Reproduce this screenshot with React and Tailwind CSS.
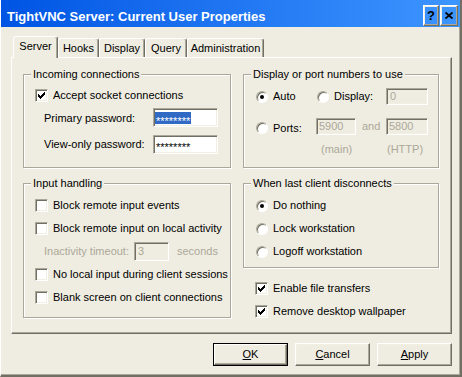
import React from 'react'

const sunken =
  'border border-t-[#ACA899] border-l-[#ACA899] border-b-white border-r-white shadow-[inset_1px_1px_0_#716F64,inset_-1px_-1px_0_#F1EFE2]'
const raised =
  'border border-t-white border-l-white border-b-[#716F64] border-r-[#716F64] shadow-[inset_-1px_-1px_0_#ACA899,inset_1px_1px_0_#F1EFE2]'
const gray = 'text-[#ACA899]'

function CheckMark() {
  return (
    <svg width="7" height="7" viewBox="0 0 7 7" className="block">
      <path d="M0 2h1v3H0zM1 3h1v3H1zM2 4h1v3H2zM3 3h1v3H3zM4 2h1v3H4zM5 1h1v3H5zM6 0h1v3H6z" fill="#000" />
    </svg>
  )
}

function Check({ checked, label }) {
  return (
    <div className="flex items-center">
      <span className={`w-[13px] h-[13px] bg-white flex items-center justify-center ${sunken}`}>
        {checked && <CheckMark />}
      </span>
      <span className="ml-[5px]">{label}</span>
    </div>
  )
}

function Radio({ on, label, className = '' }) {
  return (
    <div className={`flex items-center ${className}`}>
      <span className="w-[12px] h-[12px] rounded-full bg-white flex items-center justify-center border border-t-[#ACA899] border-l-[#ACA899] border-b-white border-r-white shadow-[inset_1px_1px_0_#716F64]">
        {on && <span className="w-[4px] h-[4px] rounded-full bg-black" />}
      </span>
      <span className="ml-[5px]">{label}</span>
    </div>
  )
}

function Group({ title, className = '', children }) {
  return (
    <fieldset className={`border border-[#ACA899] shadow-[inset_1px_1px_0_#fff,1px_1px_0_#fff] ${className}`}>
      <legend className="ml-[7px] px-[2px] bg-[#EFEDE1]">{title}</legend>
      {children}
    </fieldset>
  )
}

function Tab({ sel, w, children }) {
  return (
    <div
      className={`flex justify-center border-t border-l border-r border-t-white border-l-white border-r-[#716F64] shadow-[inset_-1px_0_0_#ACA899] rounded-t-[3px] bg-[#EFEDE1] ${
        sel ? 'relative z-10 h-[22px] -mb-[1px] pt-[3px]' : 'h-[19px] pt-[3px]'
      }`}
      style={{ width: w }}
    >
      {children}
    </div>
  )
}

function Btn({ def, children }) {
  const inner = (
    <div className={`w-full h-full flex items-center justify-center ${raised}`}>{children}</div>
  )
  return (
    <div className={`w-[75px] h-[23px] ${def ? 'border border-black' : ''}`}>{inner}</div>
  )
}

export default function App() {
  return (
    <div className="w-[462px] h-[377px] flex flex-col bg-[#EFEDE1] border-l border-l-white border-r-2 border-b-2 border-r-[#716F64] border-b-[#716F64] shadow-[inset_-1px_-1px_0_#ACA899] text-[11px] leading-[13px] text-black font-['Liberation_Sans',Arial,sans-serif]">
      {/* title bar */}
      <div className="h-[27px] shrink-0 flex bg-linear-to-r from-[#0054E3] to-[#3D95FF]">
        <div className="flex-1 pl-[6px] pt-[9px] text-white font-bold text-[13px] leading-[15px]">
          TightVNC Server: Current User Properties
        </div>
        <div className="flex gap-[1px] mt-[5px] mr-[2px] h-[21px]">
          <div className={`w-[16px] h-full flex items-center justify-center font-bold text-[13px] ${raised}`}>?</div>
          <div className={`w-[18px] h-full flex items-center justify-center ${raised}`}>
            <svg width="8" height="7" viewBox="0 0 8 7">
              <path d="M0.5 0.5L7.5 6.5M7.5 0.5L0.5 6.5" stroke="#000" strokeWidth="1.8" />
            </svg>
          </div>
        </div>
      </div>

      <div className="flex-1 pl-[10px] pt-[9px]">
        {/* tabs */}
        <div className="flex items-end h-[21px] ml-[2px]">
          <Tab sel w={45}>Server</Tab>
          <Tab w={41}>Hooks</Tab>
          <Tab w={46}>Display</Tab>
          <Tab w={42}>Query</Tab>
          <Tab w={77}>Administration</Tab>
        </div>

        {/* tab page */}
        <div className="w-[441px] h-[277px] border border-t-white border-l-white border-r-[#716F64] border-b-[#716F64] shadow-[inset_-1px_-1px_0_#ACA899] pt-[10px] pl-[11px]">
          <div className="grid grid-cols-[208px_196px] gap-x-[12px] gap-y-[9px] items-start">
            <Group title="Incoming connections" className="h-[100px]">
              <div className="pl-[11px] pt-[8px]">
                <div className="h-[13px] flex items-center">
                  <Check checked label="Accept socket connections" />
                </div>
                <div className="flex items-center mt-[6px] pl-[9px]">
                  <span className="w-[109px] pt-[2px]">Primary password:</span>
                  <div className={`w-[65px] h-[19px] bg-white flex items-center pl-[1px] ${sunken}`}>
                    <span className="bg-[#316AC5] text-white h-[12px] leading-[12px] px-[1px]">
                      <span className="inline-block translate-y-[3px]">********</span>
                    </span>
                  </div>
                </div>
                <div className="flex items-center mt-[8px] pl-[9px]">
                  <span className="w-[109px]">View-only password:</span>
                  <div className={`w-[65px] h-[19px] bg-white flex items-center pl-[2px] ${sunken}`}>
                    <span className="inline-block translate-y-[3px]">********</span>
                  </div>
                </div>
              </div>
            </Group>

            <Group title="Display or port numbers to use" className="h-[100px]">
              <div className="pl-[12px] pt-[7px]">
                <div className="flex items-center h-[17px]">
                  <Radio on label="Auto" className="w-[61px]" />
                  <Radio label="Display:" className="w-[69px]" />
                  <div className={`w-[42px] h-[17px] flex items-center pl-[3px] ${gray} ${sunken}`}>0</div>
                </div>
                <div className="flex items-center h-[17px] mt-[13px]">
                  <Radio label="Ports:" className="w-[60px] pt-[3px]" />
                  <div className={`w-[40px] h-[17px] flex items-center pl-[2px] ${gray} ${sunken}`}>5900</div>
                  <span className={`w-[30px] pl-[6px] ${gray}`}>and</span>
                  <div className={`w-[42px] h-[17px] flex items-center pl-[2px] ${gray} ${sunken}`}>5800</div>
                </div>
                <div className={`flex mt-[8px] ${gray}`}>
                  <span className="ml-[65px] w-[66px]">(main)</span>
                  <span>(HTTP)</span>
                </div>
              </div>
            </Group>

            <Group title="Input handling" className="h-[141px]">
              <div className="pl-[11px] pt-[4px]">
                <div className="h-[23px] flex items-center">
                  <Check label="Block remote input events" />
                </div>
                <div className="h-[23px] flex items-center">
                  <Check label="Block remote input on local activity" />
                </div>
                <div className="h-[23px] flex items-center pl-[9px]">
                  <span className={`w-[90px] ${gray}`}>Inactivity timeout:</span>
                  <div className={`w-[35px] h-[19px] flex items-center pl-[3px] ${gray} ${sunken}`}>3</div>
                  <span className={`ml-[8px] ${gray}`}>seconds</span>
                </div>
                <div className="h-[23px] flex items-center">
                  <Check label="No local input during client sessions" />
                </div>
                <div className="h-[23px] flex items-center">
                  <Check label="Blank screen on client connections" />
                </div>
              </div>
            </Group>

            <div>
              <Group title="When last client disconnects" className="h-[91px]">
                <div className="pl-[12px] pt-[4px]">
                  <Radio on label="Do nothing" className="h-[23px]" />
                  <Radio label="Lock workstation" className="h-[23px]" />
                  <Radio label="Logoff workstation" className="h-[23px]" />
                </div>
              </Group>
              <div className="pl-[12px] mt-[9px]">
                <div className="h-[23px] flex items-center">
                  <Check checked label="Enable file transfers" />
                </div>
                <div className="h-[23px] flex items-center">
                  <Check checked label="Remove desktop wallpaper" />
                </div>
              </div>
            </div>
          </div>
        </div>

        {/* dialog buttons */}
        <div className="w-[441px] mt-[9px] flex justify-end gap-[7px]">
          <Btn def>
            <span className="underline">O</span>K
          </Btn>
          <Btn>
            <span className="underline">C</span>ancel
          </Btn>
          <Btn>
            <span className="underline">A</span>pply
          </Btn>
        </div>
      </div>
    </div>
  )
}
